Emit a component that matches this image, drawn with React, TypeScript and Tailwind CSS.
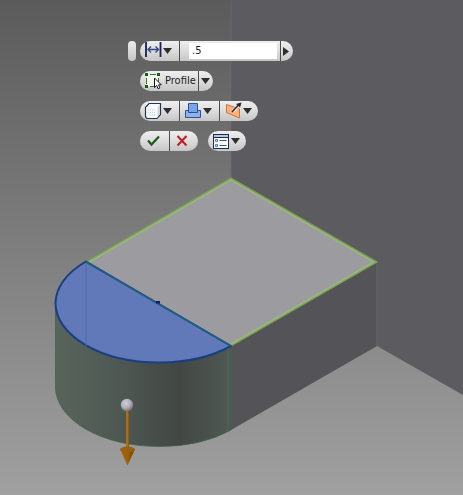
import { useState, type ButtonHTMLAttributes, type ReactNode } from 'react'
import { clsx } from 'clsx'

function DistanceIcon() {
  return (
    <svg width="18" height="18" viewBox="0 0 18 18" fill="none" aria-hidden="true">
      <path d="M2 0v15M16.5 0v15" stroke="#17204f" strokeWidth="1.8" />
      <path d="M3.5 7.5h11.5M7 4.500l-3 3 3 3M11.500 4.500l3 3-3 3" stroke="#2b4a86" strokeWidth="1.3" />
    </svg>
  )
}

function ProfileIcon() {
  return (
    <svg width="18" height="18" viewBox="0 0 18 18" fill="none" aria-hidden="true">
      <rect x="2.5" y="3.5" width="12" height="11" fill="#f3f8ee" />
      <path d="M6 2.5h6M2.5 6v6M14.5 6v4M6 14.5h4" stroke="#327a2c" strokeWidth="1" />
      <path d="M1 1h3v3H1zM13 1h3v3h-3zM1 13h3v3H1z" fill="#1c5a18" />
      <path d="M10.500 6v9.500l2.200-2 1.400 3.200 1.800-.8-1.400-3.100h2.800z" fill="#fff" stroke="#14141c" strokeWidth="1" />
    </svg>
  )
}

function SolidIcon() {
  return (
    <svg width="18" height="18" viewBox="0 0 18 18" fill="none" aria-hidden="true">
      <path d="M1.5 5.5L5 1.5h11.500v11L13 16.500H4c-1.500 0-2.500-1-2.500-2.500z" fill="#f5f7f9" stroke="#233652" strokeWidth="1.200" />
      <path d="M13 6l3-3.500v9.500l-3 3.500z" fill="#cdd3da" />
      <path d="M2.500 5.500H13V15.500" stroke="#fff" strokeWidth="1" />
      <path d="M4 8h7M4 10.500h7M4 13h7" stroke="#c3d3df" strokeWidth="1" strokeDasharray="1 1" />
    </svg>
  )
}

function JoinIcon() {
  return (
    <svg width="18" height="18" viewBox="0 0 18 18" fill="none" aria-hidden="true">
      <path d="M1.500 8.500h15v7h-15z" fill="#8fb2ee" stroke="#2a5299" />
      <path d="M4.500 1.500h9v9h-9z" fill="#7ba4e8" stroke="#2a5299" />
    </svg>
  )
}

function DirectionIcon() {
  return (
    <svg width="18" height="18" viewBox="0 0 18 18" fill="none" aria-hidden="true">
      <path d="M2.500 2.500l13 4.500v9l-13-5.500z" fill="#fbb27c" stroke="#cf7330" />
      <path d="M9 9.500l6-6.500" stroke="#fff" strokeWidth="3" />
      <path d="M8 10l8-8.500" stroke="#26262b" strokeWidth="1.600" />
      <path d="M17.500 .5l-5.500 1.500 4 3.500z" fill="#26262b" />
    </svg>
  )
}

function CheckIcon() {
  return (
    <svg width="14" height="14" viewBox="0 0 14 14" fill="none" aria-hidden="true">
      <path d="M1 6.500l3.500 4L12 2.500" stroke="#1d5a1c" strokeWidth="2.200" />
    </svg>
  )
}

function CancelIcon() {
  return (
    <svg width="14" height="14" viewBox="0 0 14 14" fill="none" aria-hidden="true">
      <path d="M2.500 2l9 9.500M11.500 2L2.500 11.500" stroke="#c11c20" strokeWidth="2" />
    </svg>
  )
}

function OptionsIcon() {
  return (
    <svg width="18" height="18" viewBox="0 0 18 18" fill="none" aria-hidden="true">
      <rect x="1.500" y="2.500" width="15" height="14" fill="#fbfcff" stroke="#1d2c4c" />
      <path d="M2 4h14" stroke="#b3c8e2" strokeWidth="2" />
      <path d="M1.500 5.500h15" stroke="#1d2c4c" />
      <path d="M3.500 7.500h2v2h-2zM3.500 12.500h2v2h-2z" fill="#cfe2fa" stroke="#4b7fc4" />
      <path d="M7.500 8.500h7M7.500 13.500h7" stroke="#31568f" />
    </svg>
  )
}

function DownArrow() {
  return (
    <svg width="9" height="6" viewBox="0 0 9 6" aria-hidden="true">
      <path d="M0 0h9L4.500 6z" fill="#2e2e30" />
    </svg>
  )
}

function Pill({ children }: { children: ReactNode }) {
  return (
    <div className="flex h-5 overflow-hidden rounded-full bg-linear-to-b from-[#efefef] via-[#dcdcdc] to-[#c6c6c6]">
      {children}
    </div>
  )
}

interface SegmentProps extends ButtonHTMLAttributes<HTMLButtonElement> {
  label?: string
  divided?: boolean
}

function Segment({ label, divided, className, children, ...props }: SegmentProps) {
  return (
    <button
      type="button"
      aria-label={label}
      title={label}
      className={clsx('flex items-center', divided && 'border-l border-[#4c4c4e]', className)}
      {...props}
    >
      {children}
    </button>
  )
}

function MiniToolbar() {
  const [distance, setDistance] = useState('.5')

  return (
    <div className="flex items-start gap-1">
      <div className="h-5 w-2 rounded-sm bg-linear-to-b from-[#ececec] to-[#c4c4c4]" />

      <div className="flex flex-col items-start gap-2.5">
        {/* Distance */}
        <Pill>
          <Segment label="Extents" className="gap-px pr-[7px] pl-1">
            <DistanceIcon />
            <DownArrow />
          </Segment>
          <div className="flex items-center border-l border-[#4c4c4e] pr-[3px] pl-[9px]">
            <input
              type="text"
              aria-label="Distance"
              value={distance}
              onChange={e => setDistance(e.target.value)}
              className="h-4 w-[88px] bg-white px-[3px] text-[11px] leading-4 text-[#1c1c1c] outline-none"
            />
          </div>
          <Segment label="More values" divided className="pr-1 pl-[2px]">
            <svg width="6" height="9" viewBox="0 0 6 9" aria-hidden="true">
              <path d="M0 0v9l6-4.500z" fill="#2e2e30" />
            </svg>
          </Segment>
        </Pill>

        {/* Profile selection */}
        <Pill>
          <Segment className="gap-[3px] pr-[2px] pl-1">
            <ProfileIcon />
            <span className="text-[11px] leading-4 text-[#1c1c1c]">Profile</span>
          </Segment>
          <Segment label="Selection options" divided className="pr-[3px] pl-[2px]">
            <DownArrow />
          </Segment>
        </Pill>

        {/* Output, operation, direction */}
        <Pill>
          <Segment label="Output" className="gap-px pr-[7px] pl-1">
            <SolidIcon />
            <DownArrow />
          </Segment>
          <Segment label="Operation" divided className="gap-px pr-[7px] pl-1">
            <JoinIcon />
            <DownArrow />
          </Segment>
          <Segment label="Direction" divided className="gap-px pr-[6px] pl-1">
            <DirectionIcon />
            <DownArrow />
          </Segment>
        </Pill>

        <div className="flex gap-2.5">
          <Pill>
            <Segment label="OK" className="pr-2 pl-[7px]">
              <CheckIcon />
            </Segment>
            <Segment label="Cancel" divided className="pr-[9px] pl-[5px]">
              <CancelIcon />
            </Segment>
          </Pill>
          <Pill>
            <Segment label="Options" className="gap-px pr-[6px] pl-1">
              <OptionsIcon />
              <DownArrow />
            </Segment>
          </Pill>
        </div>
      </div>
    </div>
  )
}

function ModelView() {
  return (
    <svg
      className="absolute inset-0 h-full w-full"
      viewBox="0 0 463 495"
      preserveAspectRatio="xMidYMid slice"
      role="img"
      aria-label="Extrusion preview"
    >
      <defs>
        <linearGradient id="ground" x1="0" y1="0" x2="0" y2="1">
          <stop offset="0" stopColor="#5b5b5b" />
          <stop offset="0.5" stopColor="#7e7e7e" />
          <stop offset="1" stopColor="#a0a0a0" />
        </linearGradient>
        <linearGradient id="cylinder" x1="0" y1="0" x2="1" y2="0">
          <stop offset="0" stopColor="#57645b" />
          <stop offset="0.35" stopColor="#4f5953" />
          <stop offset="0.7" stopColor="#424743" />
          <stop offset="1" stopColor="#505953" />
        </linearGradient>
        <linearGradient id="cone" x1="0" y1="0" x2="1" y2="0">
          <stop offset="0" stopColor="#a8690f" />
          <stop offset="0.5" stopColor="#a05f0a" />
          <stop offset="1" stopColor="#683a02" />
        </linearGradient>
        <radialGradient id="ball" cx="0.4" cy="0.35" r="0.65">
          <stop offset="0" stopColor="#d2cfd6" />
          <stop offset="0.6" stopColor="#aeabb1" />
          <stop offset="1" stopColor="#77757b" />
        </radialGradient>
      </defs>

      <rect width="463" height="495" fill="url(#ground)" />

      {/* Walls of the existing solid */}
      <path d="M231 0H463V395L377 346V262L231 178Z" fill="#5c5b5f" />
      <path d="M231 346L377 262V346L231 430Z" fill="#545358" />
      <path d="M377 262V346" stroke="#66656a" />
      <path d="M231 0V178" stroke="#707071" strokeOpacity="0.6" />

      {/* Extruded half cylinder */}
      <path d="M55.500 303V387A103 59.500 0 0 0 158.500 446.500A103 59.500 0 0 0 231 430V303Z" fill="url(#cylinder)" />
      <path d="M55.500 303V387A103 59.500 0 0 0 158.500 446.500A103 59.500 0 0 0 231 430V346" fill="none" stroke="#3f6648" strokeOpacity="0.8" />
      <path d="M228 347V431" stroke="#5b7561" strokeOpacity="0.5" />

      {/* Top face */}
      <path d="M86 262L231 178L377 262L231 346Z" fill="#9c9ba0" />
      <path d="M89 262L231 180L374 262L231 344" fill="none" stroke="#99b879" strokeWidth="1.500" />
      <path d="M86 262L231 178L377 262L231 346" fill="none" stroke="#76a448" strokeWidth="1.300" />

      {/* Selected profile */}
      <path
        d="M86 261.500A103 59.500 0 0 0 55.500 303A103 59.500 0 0 0 158.500 362.500A103 59.500 0 0 0 231 346Z"
        fill="#6179b9"
        stroke="#193f83"
        strokeWidth="2"
        strokeLinejoin="round"
      />
      <path d="M86 262L231 346" stroke="#20617f" strokeWidth="1.500" />
      <path d="M86 263V346" stroke="#526da5" />
      <path d="M156 301h4v2.500h-4z" fill="#161d5c" />

      {/* Drag arrow */}
      <path d="M127.500 410V449" stroke="#95590e" strokeWidth="3" />
      <path d="M127 410V449" stroke="#c18327" strokeWidth="1" />
      <path d="M120 449q7.500-4 15 0L127.500 465.500Z" fill="url(#cone)" />
      <ellipse cx="127.500" cy="449.500" rx="7.500" ry="3" fill="#99600f" />
      <circle cx="127" cy="405" r="6.200" fill="url(#ball)" />
    </svg>
  )
}

export default function App() {
  return (
    <main className="relative min-h-screen overflow-hidden bg-[#808080] font-['DejaVu_Sans_Condensed','DejaVu_Sans',sans-serif]">
      <ModelView />
      <div className="relative pt-[41px] pl-32">
        <MiniToolbar />
      </div>
    </main>
  )
}
